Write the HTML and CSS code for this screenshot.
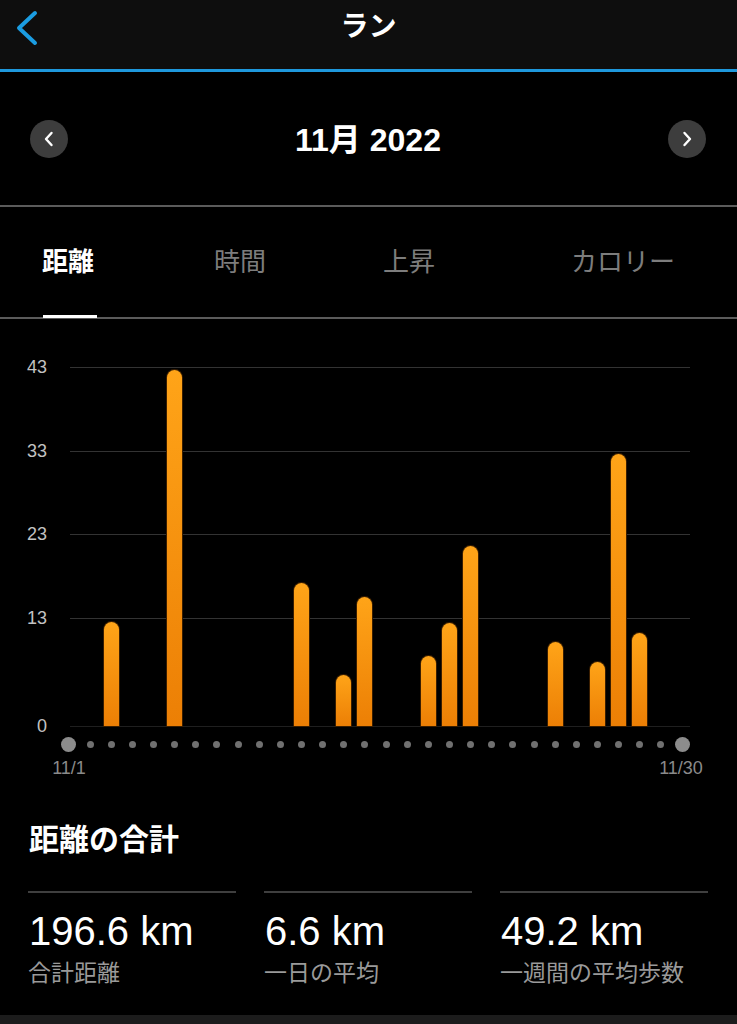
FILE: index.html
```html
<!DOCTYPE html>
<html lang="ja">
<head>
    <meta charset="UTF-8" />
    <title>ラン</title>
    <link rel="stylesheet" href="styles.css">
</head>
<body>
<header class="topbar">
    <a class="back" href="#">
        <svg width="24" height="38" viewBox="0 0 24 38"><path d="M20 4 L4 19 L20 34" /></svg>
    </a>
    <div class="title">ラン</div>
    <div></div>
</header>

<div class="month-row">
    <button class="round-btn">
        <svg width="12" height="16" viewBox="0 0 12 16"><path d="M8.5 2 L3 8 L8.5 14" /></svg>
    </button>
    <div class="month">11月 2022</div>
    <button class="round-btn">
        <svg width="12" height="16" viewBox="0 0 12 16"><path d="M3.5 2 L9 8 L3.5 14" /></svg>
    </button>
</div>

<nav class="tabs">
    <div class="tab active">距離</div>
    <div class="tab">時間</div>
    <div class="tab">上昇</div>
    <div class="tab">カロリー</div>
</nav>

<section class="chart-section">
    <div class="chart">
        <div class="ticks">
            <div class="tick"><span class="tick-label">43</span><div class="tick-line"></div></div>
            <div class="tick"><span class="tick-label">33</span><div class="tick-line"></div></div>
            <div class="tick"><span class="tick-label">23</span><div class="tick-line"></div></div>
            <div class="tick"><span class="tick-label">13</span><div class="tick-line"></div></div>
            <div class="tick"><span class="tick-label">0</span><div class="tick-line zero"></div></div>
        </div>

        <!-- one cell per day, 11/1 .. 11/30 -->
        <div class="bars">
            <div></div>
            <div></div>
            <div class="bar" style="height: 104px"></div>
            <div></div>
            <div></div>
            <div class="bar" style="height: 356px"></div>
            <div></div>
            <div></div>
            <div></div>
            <div></div>
            <div></div>
            <div class="bar" style="height: 143px"></div>
            <div></div>
            <div class="bar" style="height: 51px"></div>
            <div class="bar" style="height: 129px"></div>
            <div></div>
            <div></div>
            <div class="bar" style="height: 70px"></div>
            <div class="bar" style="height: 103px"></div>
            <div class="bar" style="height: 180px"></div>
            <div></div>
            <div></div>
            <div></div>
            <div class="bar" style="height: 84px"></div>
            <div></div>
            <div class="bar" style="height: 64px"></div>
            <div class="bar" style="height: 272px"></div>
            <div class="bar" style="height: 93px"></div>
            <div></div>
            <div></div>
        </div>
    </div>

    <div class="days">
        <span class="dot big"></span>
        <span class="dot"></span><span class="dot"></span><span class="dot"></span><span class="dot"></span>
        <span class="dot"></span><span class="dot"></span><span class="dot"></span><span class="dot"></span>
        <span class="dot"></span><span class="dot"></span><span class="dot"></span><span class="dot"></span>
        <span class="dot"></span><span class="dot"></span><span class="dot"></span><span class="dot"></span>
        <span class="dot"></span><span class="dot"></span><span class="dot"></span><span class="dot"></span>
        <span class="dot"></span><span class="dot"></span><span class="dot"></span><span class="dot"></span>
        <span class="dot"></span><span class="dot"></span><span class="dot"></span><span class="dot"></span>
        <span class="dot big"></span>
    </div>

    <div class="day-labels">
        <span>11/1</span>
        <span>11/30</span>
    </div>
</section>

<section class="stats">
    <h2>距離の合計</h2>
    <div class="stat-grid">
        <div class="stat">
            <div class="stat-value">196.6 km</div>
            <div class="stat-label">合計距離</div>
        </div>
        <div class="stat">
            <div class="stat-value">6.6 km</div>
            <div class="stat-label">一日の平均</div>
        </div>
        <div class="stat">
            <div class="stat-value">49.2 km</div>
            <div class="stat-label">一週間の平均歩数</div>
        </div>
    </div>
</section>
<div class="bottom-bar"></div>
</body>
</html>
```

FILE: styles.css
```css
body {
    margin: 0;
    font-family: "Liberation Sans", "Noto Sans CJK JP", sans-serif;
    background-color: #000;
    color: #fff;
}

.topbar {
    height: 69px;
    background-color: #0e0e0e;
    border-bottom: 3px solid #1e98dc;
    display: grid;
    grid-template-columns: 60px 1fr 60px;
    align-items: start;
}

.back {
    display: block;
    padding: 9px 0 0 15px;
}

.back svg {
    display: block;
}

.back path {
    fill: none;
    stroke: #1b9de2;
    stroke-width: 4;
    stroke-linecap: round;
    stroke-linejoin: round;
}

.title {
    padding-top: 13px;
    text-align: center;
    font-size: 28px;
    line-height: 28px;
    font-weight: bold;
}

.month-row {
    height: 133px;
    border-bottom: 2px solid #5b5b5b;
    display: flex;
    align-items: center;
    justify-content: space-between;
    padding: 0 31px 0 30px;
}

.round-btn {
    width: 38px;
    height: 38px;
    border-radius: 50%;
    border: none;
    background-color: #3d3d3d;
    padding: 0;
    display: flex;
    align-items: center;
    justify-content: center;
}

.round-btn path {
    fill: none;
    stroke: #fff;
    stroke-width: 2.4;
    stroke-linecap: round;
    stroke-linejoin: round;
}

.month {
    font-size: 32px;
    font-weight: bold;
    line-height: 40px;
    margin-top: 2px;
}

.tabs {
    height: 110px;
    border-bottom: 2px solid #5b5b5b;
    display: grid;
    grid-template-columns: 172px 169px 188px auto;
    padding-left: 42px;
    align-items: start;
}

.tab {
    justify-self: start;
    position: relative;
    padding-top: 40px;
    height: 70px;
    font-size: 26px;
    line-height: 30px;
    color: #7d7d7d;
}

.tab.active {
    color: #fff;
    font-weight: bold;
}

.tab.active::after {
    content: "";
    position: absolute;
    left: 1px;
    width: 54px;
    bottom: -1px;
    height: 3px;
    background-color: #fff;
}

.chart-section {
    padding-top: 48px;
}

.chart {
    position: relative;
}

.ticks {
    display: grid;
    grid-template-rows: 83.5px 83.5px 83.5px 108.5px 1px;
}

.tick {
    display: flex;
    align-items: flex-start;
}

.tick-label {
    width: 47px;
    margin-top: -10px;
    text-align: right;
    font-size: 18px;
    line-height: 20px;
    color: #c2c2c2;
}

.tick-line {
    margin-left: 23px;
    width: 620px;
    height: 1px;
    background-color: #333;
}

.tick-line.zero {
    background-color: #1f1f1f;
}

.bars {
    position: absolute;
    top: 0;
    left: 58.4px;
    width: 634.2px;
    height: 359px;
    display: grid;
    grid-template-columns: repeat(30, 1fr);
    align-items: end;
}

.bar {
    width: 15px;
    margin: 0 auto;
    border-radius: 8px 8px 0 0;
    background: linear-gradient(to bottom, #ffa418, #ec7f05);
    box-shadow: 0 0 0 1px #3a1e00;
}

.days {
    margin: 9px 0 0 58.4px;
    width: 634.2px;
    height: 16px;
    display: grid;
    grid-template-columns: repeat(30, 1fr);
    align-items: center;
    justify-items: center;
}

.dot {
    width: 7px;
    height: 7px;
    border-radius: 50%;
    background-color: #707070;
}

.dot.big {
    width: 15px;
    height: 15px;
    background-color: #8c8c8c;
}

.day-labels {
    margin: 6px 0 0 44px;
    width: 662px;
    display: flex;
    justify-content: space-between;
    font-size: 18px;
    line-height: 20px;
    color: #8a8a8a;
}

.day-labels span {
    width: 50px;
    text-align: center;
}

.stats {
    padding: 43.5px 0 28px 28px;
}

.stats h2 {
    margin: 0 0 33px 1px;
    font-size: 30px;
    line-height: 36px;
    font-weight: bold;
}

.stat-grid {
    display: grid;
    grid-template-columns: repeat(3, 208px);
    gap: 28px;
}

.stat {
    border-top: 2px solid #3f3f3f;
    padding-top: 16px;
}

.stat-value {
    font-size: 40px;
    line-height: 44px;
    margin-left: 1px;
}

.stat-label {
    margin-top: 6px;
    font-size: 23px;
    line-height: 28px;
    color: #9a9a9a;
}

.bottom-bar {
    height: 12px;
    background-color: #1c1c1c;
}
```
